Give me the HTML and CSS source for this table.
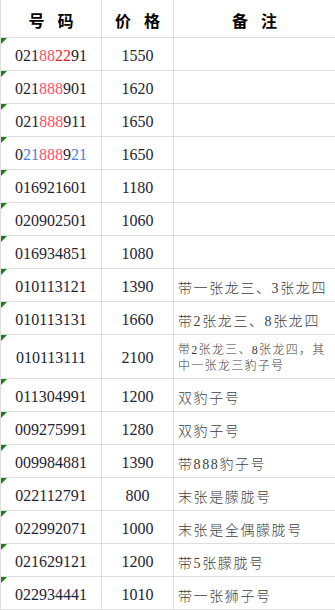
FILE: index.html
```html
<!DOCTYPE html>
<html lang="zh-CN">
<head>
<meta charset="utf-8">
<title>号码价格表</title>
<link rel="stylesheet" href="styles.css">
</head>
<body>
<div class="sheet">
  <div class="cell head">号码</div>
  <div class="cell head">价格</div>
  <div class="cell head">备注</div>

  <div class="cell num">021<span class="pk">88</span><span class="rd">22</span>91</div>
  <div class="cell price">1550</div>
  <div class="cell note"></div>

  <div class="cell num">021<span class="pk">888</span>901</div>
  <div class="cell price">1620</div>
  <div class="cell note"></div>

  <div class="cell num">021<span class="pk">888</span>911</div>
  <div class="cell price">1650</div>
  <div class="cell note"></div>

  <div class="cell num">0<span class="bl">21</span><span class="pk">888</span>9<span class="bl">21</span></div>
  <div class="cell price">1650</div>
  <div class="cell note"></div>

  <div class="cell num">016921601</div>
  <div class="cell price">1180</div>
  <div class="cell note"></div>

  <div class="cell num">020902501</div>
  <div class="cell price">1060</div>
  <div class="cell note"></div>

  <div class="cell num">016934851</div>
  <div class="cell price">1080</div>
  <div class="cell note"></div>

  <div class="cell num">010113121</div>
  <div class="cell price">1390</div>
  <div class="cell note">带一张龙三、3张龙四</div>

  <div class="cell num">010113131</div>
  <div class="cell price">1660</div>
  <div class="cell note">带2张龙三、8张龙四</div>

  <div class="cell num">010113111</div>
  <div class="cell price">2100</div>
  <div class="cell note small">带2张龙三、8张龙四，其<br>中一张龙三豹子号</div>

  <div class="cell num">011304991</div>
  <div class="cell price">1200</div>
  <div class="cell note">双豹子号</div>

  <div class="cell num">009275991</div>
  <div class="cell price">1280</div>
  <div class="cell note">双豹子号</div>

  <div class="cell num">009984881</div>
  <div class="cell price">1390</div>
  <div class="cell note">带888豹子号</div>

  <div class="cell num">022112791</div>
  <div class="cell price">800</div>
  <div class="cell note">末张是朦胧号</div>

  <div class="cell num">022992071</div>
  <div class="cell price">1000</div>
  <div class="cell note">末张是全偶朦胧号</div>

  <div class="cell num">021629121</div>
  <div class="cell price">1200</div>
  <div class="cell note">带5张朦胧号</div>

  <div class="cell num">022934441</div>
  <div class="cell price">1010</div>
  <div class="cell note">带一张狮子号</div>
</div>
</body>
</html>
```
FILE: styles.css
```css
html, body {
  margin: 0;
  padding: 0;
  background: #ffffff;
}

.sheet {
  display: grid;
  grid-template-columns: 100px 71px 1fr;
  grid-template-rows: 37px repeat(9, 32px) 43px repeat(7, 32px);
  gap: 1px;
  padding: 0 0 1px 1px;
  background: #dedede;
  width: 334px;
}

.cell {
  background: #ffffff;
  display: flex;
  align-items: center;
  position: relative;
  overflow: hidden;
  white-space: nowrap;
}

.head {
  justify-content: center;
  font-family: "Noto Sans CJK SC", sans-serif;
  font-weight: 700;
  font-size: 16px;
  letter-spacing: 13px;
  padding: 3px 0 0 13px;
  color: #000000;
}

.num, .price {
  justify-content: center;
  font-family: "Liberation Serif", "Noto Sans CJK SC", serif;
  font-size: 16px;
  color: #1e2433;
  padding-top: 3px;
}

.num::before {
  content: "";
  position: absolute;
  left: 0;
  top: 0;
  width: 6px;
  height: 6px;
  background: #1b7f1b;
  clip-path: polygon(0 0, 100% 0, 0 100%);
}

.pk { color: #ff5068; }
.rd { color: #ff1a1a; }
.bl { color: #4d80d6; }

.note {
  font-family: "Liberation Serif", "Noto Sans CJK SC", serif;
  font-size: 14px;
  font-weight: 300;
  letter-spacing: 1.6px;
  color: #404040;
  padding: 3px 0 0 4px;
}

.note.small {
  font-size: 12px;
  line-height: 16px;
  letter-spacing: 1.3px;
  padding-top: 2px;
}
```
